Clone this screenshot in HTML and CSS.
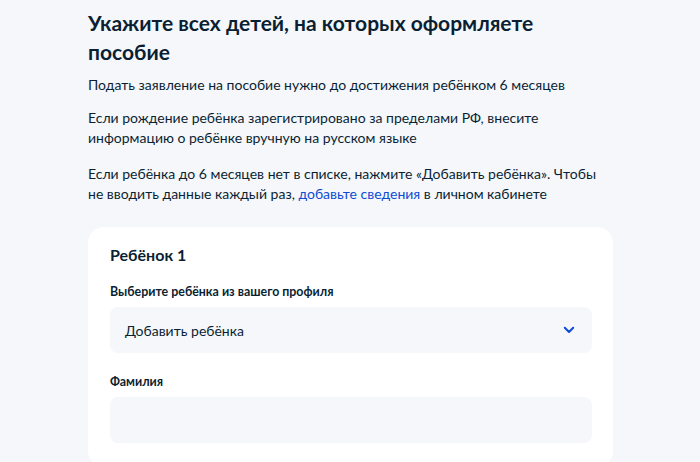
FILE: index.html
```html
<!DOCTYPE html>
<html lang="ru">
<head>
<meta charset="utf-8">
<link rel="stylesheet" href="styles.css">
</head>
<body>
<main class="page">
  <h1 class="title">Укажите всех детей, на которых оформляете пособие</h1>
  <p class="text first">Подать заявление на пособие нужно до достижения ребёнком 6 месяцев</p>
  <p class="text second">Если рождение ребёнка зарегистрировано за пределами РФ, внесите информацию о ребёнке вручную на русском языке</p>
  <p class="text">Если ребёнка до 6 месяцев нет в списке, нажмите «Добавить ребёнка». Чтобы не вводить данные каждый раз, <a class="link" href="#">добавьте сведения</a> в личном кабинете</p>
  <section class="card">
    <h2 class="card-title">Ребёнок 1</h2>
    <div class="field">
      <label class="label">Выберите ребёнка из вашего профиля</label>
      <div class="select">
        <span>Добавить ребёнка</span>
        <svg class="chevron" width="12" height="8" viewBox="0 0 12 8"><path d="M1.8 1.8 L6 6 L10.2 1.8" fill="none" stroke="#0d4cd3" stroke-width="2" stroke-linecap="round" stroke-linejoin="round"/></svg>
      </div>
    </div>
    <div class="field">
      <label class="label">Фамилия</label>
      <div class="input"></div>
    </div>
  </section>
</main>
</body>
</html>
```

FILE: styles.css
```css
html, body {
  margin: 0;
  padding: 0;
  background: #f5f7fb;
}
body {
  font-family: Lato, "Noto Sans", sans-serif;
  color: #0b1f33;
}
.page {
  width: 525px;
  margin-left: 88px;
  padding-top: 8px;
}
.title {
  margin: 0;
  font-size: 21px;
  line-height: 29px;
  font-weight: 700;
}
.text {
  margin: 16px 0 0;
  font-size: 14px;
  line-height: 20px;
  width: 522px;
}
.text.first {
  margin-top: 9px;
}
.text.second {
  margin-top: 13px;
}
.link {
  color: #0d4cd3;
  text-decoration: none;
}
.card {
  margin-top: 23px;
  background: #fff;
  border-radius: 16px;
  padding: 16px 21px 24px 22px;
}
.card-title {
  margin: 0;
  font-size: 16px;
  line-height: 24px;
  font-weight: 700;
}
.field {
  margin-top: 17px;
  display: flex;
  flex-direction: column;
}
.field + .field {
  margin-top: 21px;
}
.label {
  font-size: 12.4px;
  line-height: 16px;
  font-weight: 700;
  margin-bottom: 7px;
}
.select, .input {
  height: 46px;
  background: #f5f7fa;
  border-radius: 8px;
  box-sizing: border-box;
}
.select {
  display: flex;
  align-items: center;
  justify-content: space-between;
  padding: 0 17px 0 15px;
  font-size: 14px;
}
```
